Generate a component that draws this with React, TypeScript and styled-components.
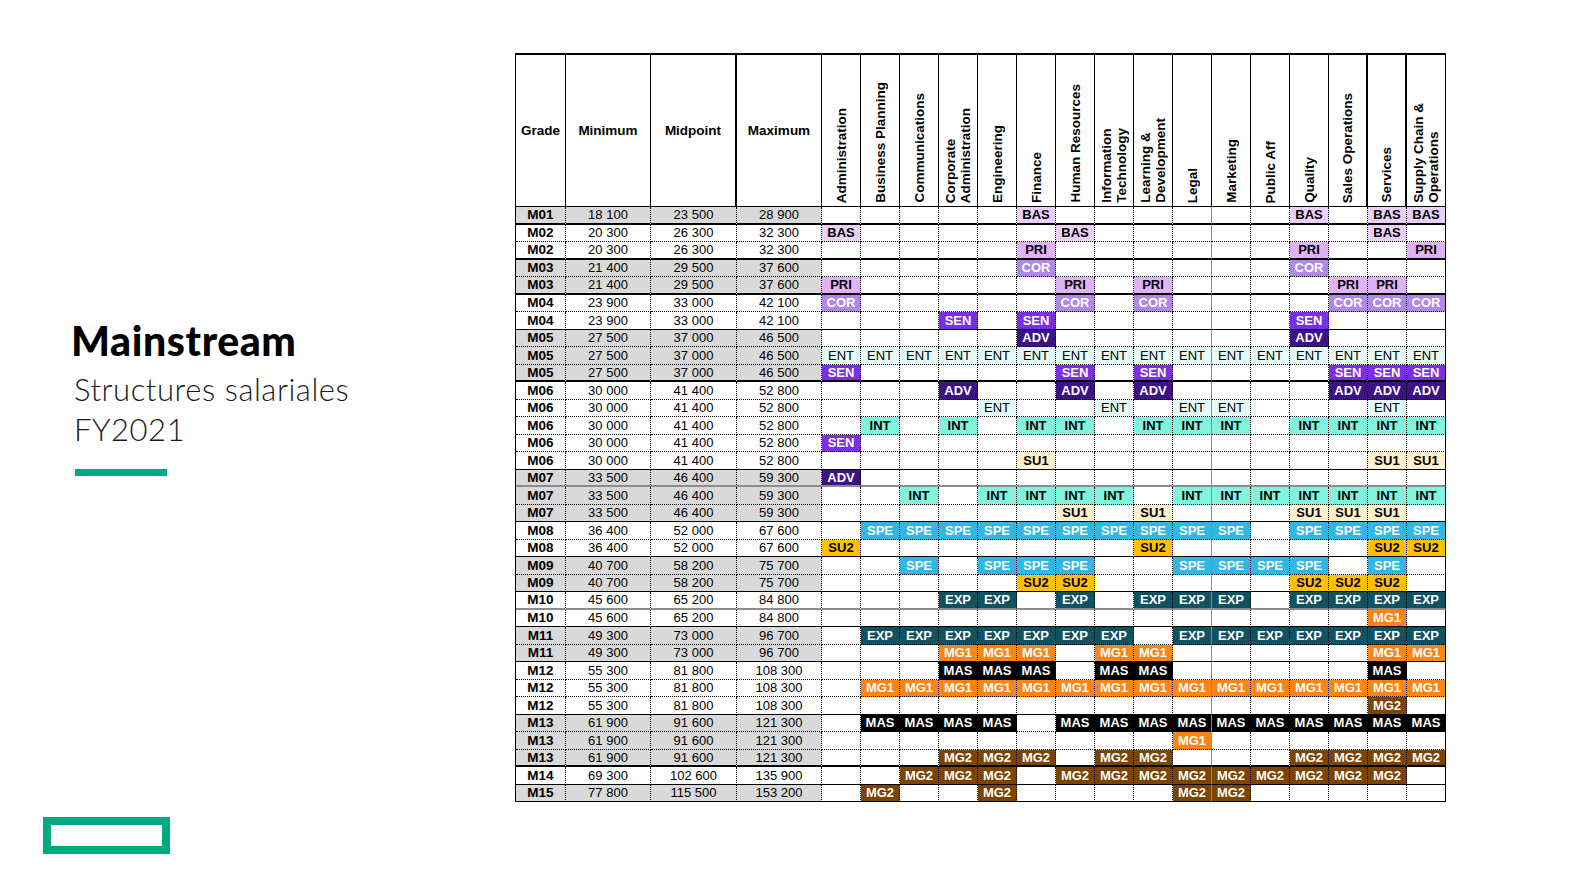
import React from "react";
import styled, { createGlobalStyle } from "styled-components";

const GlobalStyle = createGlobalStyle`
  html, body { margin: 0; padding: 0; background: #ffffff; }
  #root { width: 1569px; height: 888px; }
`;

const CODE_STYLES: Record<string, { bg: string; fg: string; weight: number }> = {
  BAS: { bg: "#EACFF6", fg: "#000000", weight: 700 },
  PRI: { bg: "#E0B2F8", fg: "#000000", weight: 700 },
  COR: { bg: "#B088E8", fg: "#FFFFFF", weight: 700 },
  SEN: { bg: "#7A2FE4", fg: "#FFFFFF", weight: 700 },
  ADV: { bg: "#3C1383", fg: "#FFFFFF", weight: 700 },
  ENT: { bg: "#E6FBF8", fg: "#000000", weight: 400 },
  INT: { bg: "#80F4DD", fg: "#000000", weight: 700 },
  SU1: { bg: "#FFF2CC", fg: "#000000", weight: 700 },
  SPE: { bg: "#32B6E4", fg: "#FFFFFF", weight: 700 },
  SU2: { bg: "#FFC000", fg: "#000000", weight: 700 },
  EXP: { bg: "#115160", fg: "#FFFFFF", weight: 700 },
  MG1: { bg: "#FF8412", fg: "#FFFFFF", weight: 700 },
  MAS: { bg: "#000000", fg: "#FFFFFF", weight: 700 },
  MG2: { bg: "#7B4400", fg: "#FFFFFF", weight: 700 },
};

const FUNCTIONS = [
  "Administration",
  "Business Planning",
  "Communications",
  "Corporate\nAdministration",
  "Engineering",
  "Finance",
  "Human Resources",
  "Information\nTechnology",
  "Learning &\nDevelopment",
  "Legal",
  "Marketing",
  "Public Aff",
  "Quality",
  "Sales Operations",
  "Services",
  "Supply Chain &\nOperations",
];

type Row = { g: string; min: string; mid: string; max: string; codes: string; bottom: string };

const T = "2px solid #000";
const S = "1px solid #000";
const D = "1px dotted #000";
const G = "2px solid #8c8c8c";

const ALL = (c: string) => Array(16).fill(c).join(" ");

const ROWS: Row[] = [
  { g: "M01", min: "18 100", mid: "23 500", max: "28 900", codes: "- - - - - BAS - - - - - - BAS - BAS BAS", bottom: T },
  { g: "M02", min: "20 300", mid: "26 300", max: "32 300", codes: "BAS - - - - - BAS - - - - - - - BAS -", bottom: D },
  { g: "M02", min: "20 300", mid: "26 300", max: "32 300", codes: "- - - - - PRI - - - - - - PRI - - PRI", bottom: T },
  { g: "M03", min: "21 400", mid: "29 500", max: "37 600", codes: "- - - - - COR - - - - - - COR - - -", bottom: D },
  { g: "M03", min: "21 400", mid: "29 500", max: "37 600", codes: "PRI - - - - - PRI - PRI - - - - PRI PRI -", bottom: T },
  { g: "M04", min: "23 900", mid: "33 000", max: "42 100", codes: "COR - - - - - COR - COR - - - - COR COR COR", bottom: D },
  { g: "M04", min: "23 900", mid: "33 000", max: "42 100", codes: "- - - SEN - SEN - - - - - - SEN - - -", bottom: S },
  { g: "M05", min: "27 500", mid: "37 000", max: "46 500", codes: "- - - - - ADV - - - - - - ADV - - -", bottom: D },
  { g: "M05", min: "27 500", mid: "37 000", max: "46 500", codes: ALL("ENT"), bottom: D },
  { g: "M05", min: "27 500", mid: "37 000", max: "46 500", codes: "SEN - - - - - SEN - SEN - - - - SEN SEN SEN", bottom: T },
  { g: "M06", min: "30 000", mid: "41 400", max: "52 800", codes: "- - - ADV - - ADV - ADV - - - - ADV ADV ADV", bottom: D },
  { g: "M06", min: "30 000", mid: "41 400", max: "52 800", codes: "- - - - ENT - - ENT - ENT ENT - - - ENT -", bottom: D },
  { g: "M06", min: "30 000", mid: "41 400", max: "52 800", codes: "- INT - INT - INT INT - INT INT INT - INT INT INT INT", bottom: D },
  { g: "M06", min: "30 000", mid: "41 400", max: "52 800", codes: "SEN - - - - - - - - - - - - - - -", bottom: D },
  { g: "M06", min: "30 000", mid: "41 400", max: "52 800", codes: "- - - - - SU1 - - - - - - - - SU1 SU1", bottom: S },
  { g: "M07", min: "33 500", mid: "46 400", max: "59 300", codes: "ADV - - - - - - - - - - - - - - -", bottom: G },
  { g: "M07", min: "33 500", mid: "46 400", max: "59 300", codes: "- - INT - INT INT INT INT - INT INT INT INT INT INT INT", bottom: D },
  { g: "M07", min: "33 500", mid: "46 400", max: "59 300", codes: "- - - - - - SU1 - SU1 - - - SU1 SU1 SU1 -", bottom: S },
  { g: "M08", min: "36 400", mid: "52 000", max: "67 600", codes: "- SPE SPE SPE SPE SPE SPE SPE SPE SPE SPE - SPE SPE SPE SPE", bottom: D },
  { g: "M08", min: "36 400", mid: "52 000", max: "67 600", codes: "SU2 - - - - - - - SU2 - - - - - SU2 SU2", bottom: S },
  { g: "M09", min: "40 700", mid: "58 200", max: "75 700", codes: "- - SPE - SPE SPE SPE - - SPE SPE SPE SPE - SPE -", bottom: D },
  { g: "M09", min: "40 700", mid: "58 200", max: "75 700", codes: "- - - - - SU2 SU2 - - - - - SU2 SU2 SU2 -", bottom: S },
  { g: "M10", min: "45 600", mid: "65 200", max: "84 800", codes: "- - - EXP EXP - EXP - EXP EXP EXP - EXP EXP EXP EXP", bottom: G },
  { g: "M10", min: "45 600", mid: "65 200", max: "84 800", codes: "- - - - - - - - - - - - - - MG1 -", bottom: S },
  { g: "M11", min: "49 300", mid: "73 000", max: "96 700", codes: "- EXP EXP EXP EXP EXP EXP EXP - EXP EXP EXP EXP EXP EXP EXP", bottom: D },
  { g: "M11", min: "49 300", mid: "73 000", max: "96 700", codes: "- - - MG1 MG1 MG1 - MG1 MG1 - - - - - MG1 MG1", bottom: S },
  { g: "M12", min: "55 300", mid: "81 800", max: "108 300", codes: "- - - MAS MAS MAS - MAS MAS - - - - - MAS -", bottom: D },
  { g: "M12", min: "55 300", mid: "81 800", max: "108 300", codes: "- " + Array(15).fill("MG1").join(" "), bottom: D },
  { g: "M12", min: "55 300", mid: "81 800", max: "108 300", codes: "- - - - - - - - - - - - - - MG2 -", bottom: S },
  { g: "M13", min: "61 900", mid: "91 600", max: "121 300", codes: "- MAS MAS MAS MAS - MAS MAS MAS MAS MAS MAS MAS MAS MAS MAS", bottom: D },
  { g: "M13", min: "61 900", mid: "91 600", max: "121 300", codes: "- - - - - - - - - MG1 - - - - - -", bottom: D },
  { g: "M13", min: "61 900", mid: "91 600", max: "121 300", codes: "- - - MG2 MG2 MG2 - MG2 MG2 - - - MG2 MG2 MG2 MG2", bottom: T },
  { g: "M14", min: "69 300", mid: "102 600", max: "135 900", codes: "- - MG2 MG2 MG2 - MG2 MG2 MG2 MG2 MG2 MG2 MG2 MG2 MG2 -", bottom: S },
  { g: "M15", min: "77 800", mid: "115 500", max: "153 200", codes: "- MG2 - - MG2 - - - - MG2 MG2 - - - - -", bottom: S },
];

const Page = styled.div`
  display: flex;
  width: 1569px;
  height: 888px;
  background: #ffffff;
  font-family: "Liberation Sans", Arial, sans-serif;
  color: #000;
`;

const Side = styled.aside`
  width: 515px;
  flex: none;
  display: flex;
  flex-direction: column;
  box-sizing: border-box;
  padding: 321px 0 34px 0;
`;

const Title = styled.h1`
  margin: 0 0 0 71px;
  font-family: Lato, "Open Sans", sans-serif;
  font-weight: 900;
  font-size: 41px;
  line-height: 40px;
  letter-spacing: 0.6px;
  color: #000;
`;

const Subtitle = styled.p`
  margin: 8px 0 0 74px;
  font-family: Lato, "Open Sans", sans-serif;
  font-weight: 300;
  font-size: 31px;
  line-height: 40px;
  letter-spacing: 0.55px;
  color: #1a1a1a;
`;

const Accent = styled.div`
  margin: 20px 0 0 75px;
  width: 92px;
  height: 7px;
  background: #01a982;
`;

const Logo = styled.div`
  margin-top: auto;
  margin-left: 43px;
  width: 127px;
  height: 37px;
  box-sizing: border-box;
  border: 8px solid #01a982;
`;

const Main = styled.main`
  padding-top: 53px;
`;

const Grid = styled.div`
  display: grid;
  grid-template-columns: 50px 85px 86px 85px repeat(16, 39px);
  grid-template-rows: 152px repeat(34, 17.5px);
  border-top: 2px solid #000;
  border-left: 1px solid #000;
`;

const HeadCell = styled.div<{ $thick?: boolean }>`
  box-sizing: border-box;
  border-right: ${(p) => (p.$thick ? "2px" : "1px")} solid #000;
  border-bottom: 1px solid #000;
  display: flex;
  align-items: center;
  justify-content: center;
  font-weight: 700;
  font-size: 13.5px;
`;

const VHeadCell = styled(HeadCell)`
  align-items: flex-end;
  padding-bottom: 3px;
`;

const VText = styled.span`
  writing-mode: vertical-rl;
  transform: rotate(180deg);
  white-space: pre;
  line-height: 15px;
  font-weight: 700;
  font-size: 13.5px;
`;

const Cell = styled.div<{ $bottom: string; $right: string; $bg?: string; $fg?: string; $weight?: number; $size?: number }>`
  box-sizing: border-box;
  border-right: ${(p) => p.$right};
  border-bottom: ${(p) => p.$bottom};
  background: ${(p) => p.$bg || "#ffffff"};
  color: ${(p) => p.$fg || "#000"};
  font-weight: ${(p) => p.$weight ?? 400};
  font-size: ${(p) => p.$size ?? 13}px;
  display: flex;
  align-items: center;
  justify-content: center;
  line-height: 1;
  overflow: hidden;
  white-space: nowrap;
`;

const isShaded = (g: string) => parseInt(g.slice(1), 10) % 2 === 1;

export default function App() {
  return (
    <>
      <GlobalStyle />
      <Page>
        <Side>
          <Title>Mainstream</Title>
          <Subtitle>
            Structures salariales
            <br />
            FY2021
          </Subtitle>
          <Accent />
          <Logo />
        </Side>
        <Main>
          <Grid>
            <HeadCell>Grade</HeadCell>
            <HeadCell>Minimum</HeadCell>
            <HeadCell $thick>Midpoint</HeadCell>
            <HeadCell>Maximum</HeadCell>
            {FUNCTIONS.map((f, i) => (
              <VHeadCell key={f} $thick={i === 13 || i === 14}>
                <VText>{f}</VText>
              </VHeadCell>
            ))}
            {ROWS.map((r, ri) => {
              const shade = isShaded(r.g) ? "#D9D9D9" : "#ffffff";
              const codes = r.codes.split(" ");
              return (
                <React.Fragment key={ri}>
                  <Cell $bottom={r.bottom} $right={D} $bg={shade} $weight={700} $size={13.5}>
                    {r.g}
                  </Cell>
                  <Cell $bottom={r.bottom} $right={D} $bg={shade}>{r.min}</Cell>
                  <Cell $bottom={r.bottom} $right={D} $bg={shade}>{r.mid}</Cell>
                  <Cell $bottom={r.bottom} $right={D} $bg={shade}>{r.max}</Cell>
                  {codes.map((c, ci) => {
                    const st = CODE_STYLES[c];
                    const right = ci === 15 ? S : ci === 9 ? "1px solid #8c8c8c" : D;
                    return (
                      <Cell
                        key={ci}
                        $bottom={r.bottom}
                        $right={right}
                        $bg={st?.bg}
                        $fg={st?.fg}
                        $weight={st ? st.weight : 400}
                        $size={13}
                      >
                        {st ? c : ""}
                      </Cell>
                    );
                  })}
                </React.Fragment>
              );
            })}
          </Grid>
        </Main>
      </Page>
    </>
  );
}
